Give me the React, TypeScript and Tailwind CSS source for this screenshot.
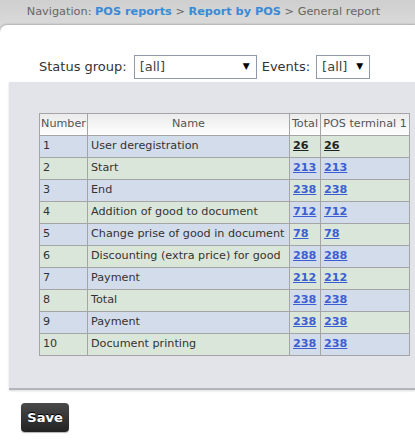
import React from "react";

const rows = [
  { n: 1, name: "User deregistration", total: 26, pos: 26, visited: true },
  { n: 2, name: "Start", total: 213, pos: 213 },
  { n: 3, name: "End", total: 238, pos: 238 },
  { n: 4, name: "Addition of good to document", total: 712, pos: 712 },
  { n: 5, name: "Change prise of good in document", total: 78, pos: 78 },
  { n: 6, name: "Discounting (extra price) for good", total: 288, pos: 288 },
  { n: 7, name: "Payment", total: 212, pos: 212 },
  { n: 8, name: "Total", total: 238, pos: 238 },
  { n: 9, name: "Payment", total: 238, pos: 238 },
  { n: 10, name: "Document printing", total: 238, pos: 238 },
];

function Select({ width, value }: { width: string; value: string }) {
  return (
    <div
      className={`${width} h-[24px] border border-[#8f9aab] bg-white flex items-center justify-between pl-[5px] pr-[6px] text-[13px] text-[#444]`}
    >
      <span>{value}</span>
      <span className="text-[9px] text-black">▼</span>
    </div>
  );
}

export default function App() {
  return (
    <div className="w-[415px] h-[442px] overflow-hidden bg-[#d6d6d6] font-['DejaVu_Sans',Verdana,sans-serif]">
      {/* navigation bar */}
      <div className="h-[25px] flex items-center justify-center pr-[8px] text-[11.3px] text-[#666] bg-gradient-to-b from-[#cfcfcf] to-[#dadada]">
        <span>
          Navigation: <b className="text-[#3a8ad6]">POS reports</b> &gt;{" "}
          <b className="text-[#3a8ad6]">Report by POS</b> &gt; General report
        </span>
      </div>

      <div className="bg-white rounded-tl-[7px] shadow-[0_-1px_2px_rgba(0,0,0,0.2)] h-[417px]">
        {/* filters */}
        <div className="flex items-center pt-[30px] pl-[39px] text-[13px] text-[#333]">
          <span className="mr-[7px]">Status group:</span>
          <Select width="w-[123px]" value="[all]" />
          <span className="ml-[5px] mr-[6px]">Events:</span>
          <Select width="w-[54px]" value="[all]" />
        </div>

        {/* grey panel */}
        <div className="ml-[9px] mt-[3px] bg-[#e3e4e9] pt-[31px] pb-[32px] pl-[30px] border-b-2 border-[#b4b5ba] shadow-[0_1px_2px_rgba(0,0,0,0.15)]">
          <table className="table-fixed border-collapse w-[370px] text-[11.2px] text-[#333]">
            <thead>
              <tr className="h-[22px] bg-gradient-to-b from-[#ebebeb] to-white">
                <th className="w-[48px] border border-[#a5a5a5] font-normal text-[#555] px-0">Number</th>
                <th className="w-[202px] border border-[#a5a5a5] font-normal text-[#555]">Name</th>
                <th className="w-[31px] border border-[#a5a5a5] font-normal text-[#555] px-0">Total</th>
                <th className="w-[89px] border border-[#a5a5a5] font-normal text-[#555] px-0 whitespace-nowrap">POS terminal 1</th>
              </tr>
            </thead>
            <tbody>
              {rows.map((r) => {
                const odd = r.n % 2 === 1;
                const left = odd ? "bg-[#d3dcea]" : "bg-[#dae6d9]";
                const right = odd ? "bg-[#dae6d9]" : "bg-[#d3dcea]";
                const link = r.visited ? "text-[#222]" : "text-[#3b5fd3]";
                return (
                  <tr key={r.n} className="h-[22px]">
                    <td className={`${left} border border-[#a5a5a5] pl-[3px]`}>{r.n}</td>
                    <td className={`${left} border border-[#a5a5a5] pl-[3px] whitespace-nowrap`}>{r.name}</td>
                    <td className={`${right} border border-[#a5a5a5] pl-[3px]`}>
                      <a className={`${link} font-bold underline`}>{r.total}</a>
                    </td>
                    <td className={`${right} border border-[#a5a5a5] pl-[3px]`}>
                      <a className={`${link} font-bold underline`}>{r.pos}</a>
                    </td>
                  </tr>
                );
              })}
            </tbody>
          </table>
        </div>

        {/* save */}
        <div className="pl-[21px] pt-[13px]">
          <button className="w-[48px] h-[29px] rounded-[4px] bg-gradient-to-b from-[#4a4a4a] to-[#222] text-white font-bold text-[13px] [text-shadow:0_-1px_0_#000] shadow-[0_1px_1px_rgba(0,0,0,0.3)]">
            Save
          </button>
        </div>
      </div>
    </div>
  );
}
